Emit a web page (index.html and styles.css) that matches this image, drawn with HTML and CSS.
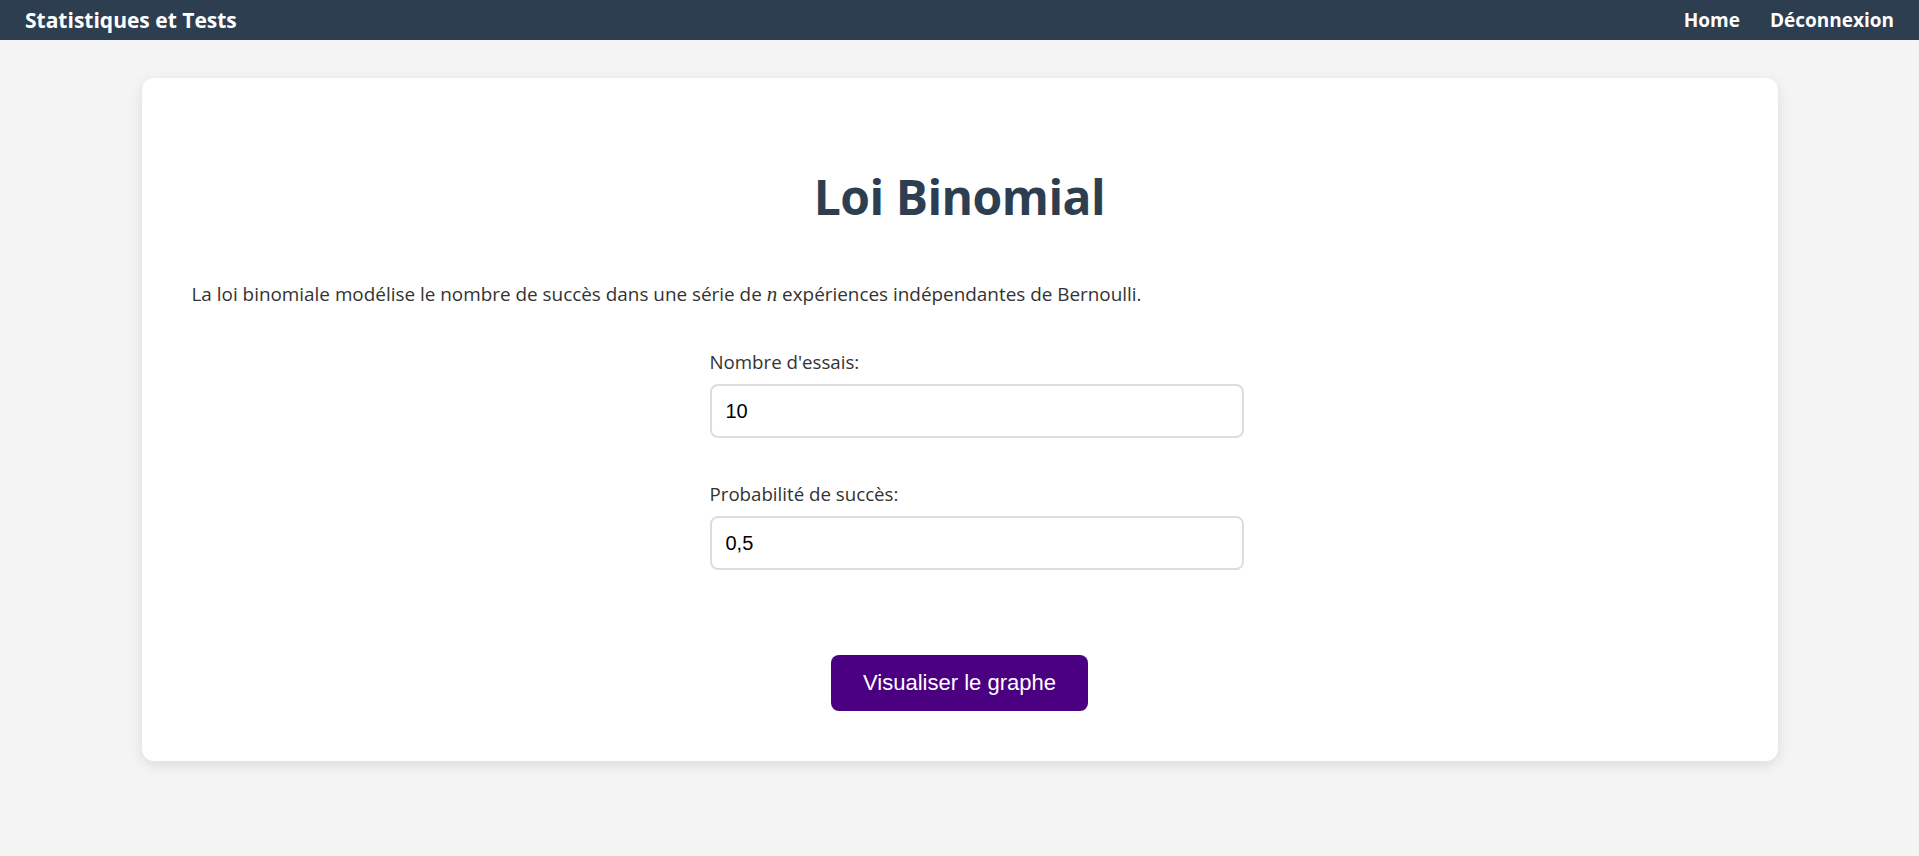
FILE: index.html
```html
<!DOCTYPE html>
<html lang="fr">
<head>
<meta charset="utf-8">
<title>Loi Binomial</title>
<link rel="stylesheet" href="styles.css">
</head>
<body>
<nav class="navbar">
  <div class="brand">Statistiques et Tests</div>
  <div class="nav-links">
    <a href="#" class="nav-link">Home</a>
    <a href="#" class="nav-link">Déconnexion</a>
  </div>
</nav>
<main class="page">
  <section class="card">
    <h1 class="title">Loi Binomial</h1>
    <p class="intro">La loi binomiale modélise le nombre de succès dans une série de <span class="math">n</span> expériences indépendantes de Bernoulli.</p>
    <form class="form">
      <div class="field">
        <label class="label" for="n">Nombre d'essais:</label>
        <input class="input" id="n" type="text" value="10">
      </div>
      <div class="field">
        <label class="label" for="p">Probabilité de succès:</label>
        <input class="input" id="p" type="text" value="0,5">
      </div>
      <div class="actions">
        <button class="btn" type="button">Visualiser le graphe</button>
      </div>
    </form>
  </section>
</main>
</body>
</html>
```
FILE: styles.css
```css
* { box-sizing: border-box; }
html, body { margin: 0; padding: 0; }
body {
  background: #f4f4f4;
  font-family: "Open Sans", "Noto Sans", sans-serif;
  color: #333;
}
.navbar {
  height: 40px;
  background: #2c3e50;
  display: flex;
  align-items: center;
  justify-content: space-between;
  padding: 0 25px;
}
.brand {
  color: #fff;
  font-weight: 700;
  font-size: 21px;
}
.nav-links { display: flex; gap: 30px; }
.nav-link {
  color: #fff;
  text-decoration: none;
  font-weight: 700;
  font-size: 19px;
}
.page { padding: 38px 0 60px; }
.card {
  width: 1636px;
  margin: 0 auto;
  background: #fff;
  border-radius: 12px;
  box-shadow: 0 4px 14px rgba(0,0,0,0.1);
  padding: 50px;
  height: 683px;
}
.title {
  margin: 38px 0 0;
  text-align: center;
  font-size: 48px;
  line-height: 62px;
  font-weight: 700;
  color: #2c3e50;
  letter-spacing: -0.5px;
}
.intro {
  margin: 54px 0 0;
  font-size: 18.9px;
  line-height: 24px;
  color: #333;
}
.math {
  font-family: "Liberation Serif", "DejaVu Serif", serif;
  font-style: italic;
  font-size: 21px;
}
.form {
  width: 534px;
  margin: 45px auto 0;
  position: relative;
  left: 17px;
}
.field { display: flex; flex-direction: column; }
.field + .field { margin-top: 45px; }
.label {
  font-size: 18.7px;
  line-height: 22px;
  color: #333;
  margin-bottom: 11px;
}
.input {
  width: 100%;
  height: 54px;
  border: 2px solid #ddd;
  border-radius: 8px;
  padding: 0 14px;
  font-family: "Liberation Sans", Arial, sans-serif;
  font-size: 20px;
  color: #000;
  background: #fff;
}
.actions {
  display: flex;
  justify-content: center;
  margin-top: 85px;
  position: relative;
  left: -17px;
}
.btn {
  height: 56px;
  padding: 0 32px;
  border: none;
  border-radius: 8px;
  background: #4b0082;
  color: #fff;
  font-family: "Liberation Sans", Arial, sans-serif;
  font-size: 22px;
}
```
